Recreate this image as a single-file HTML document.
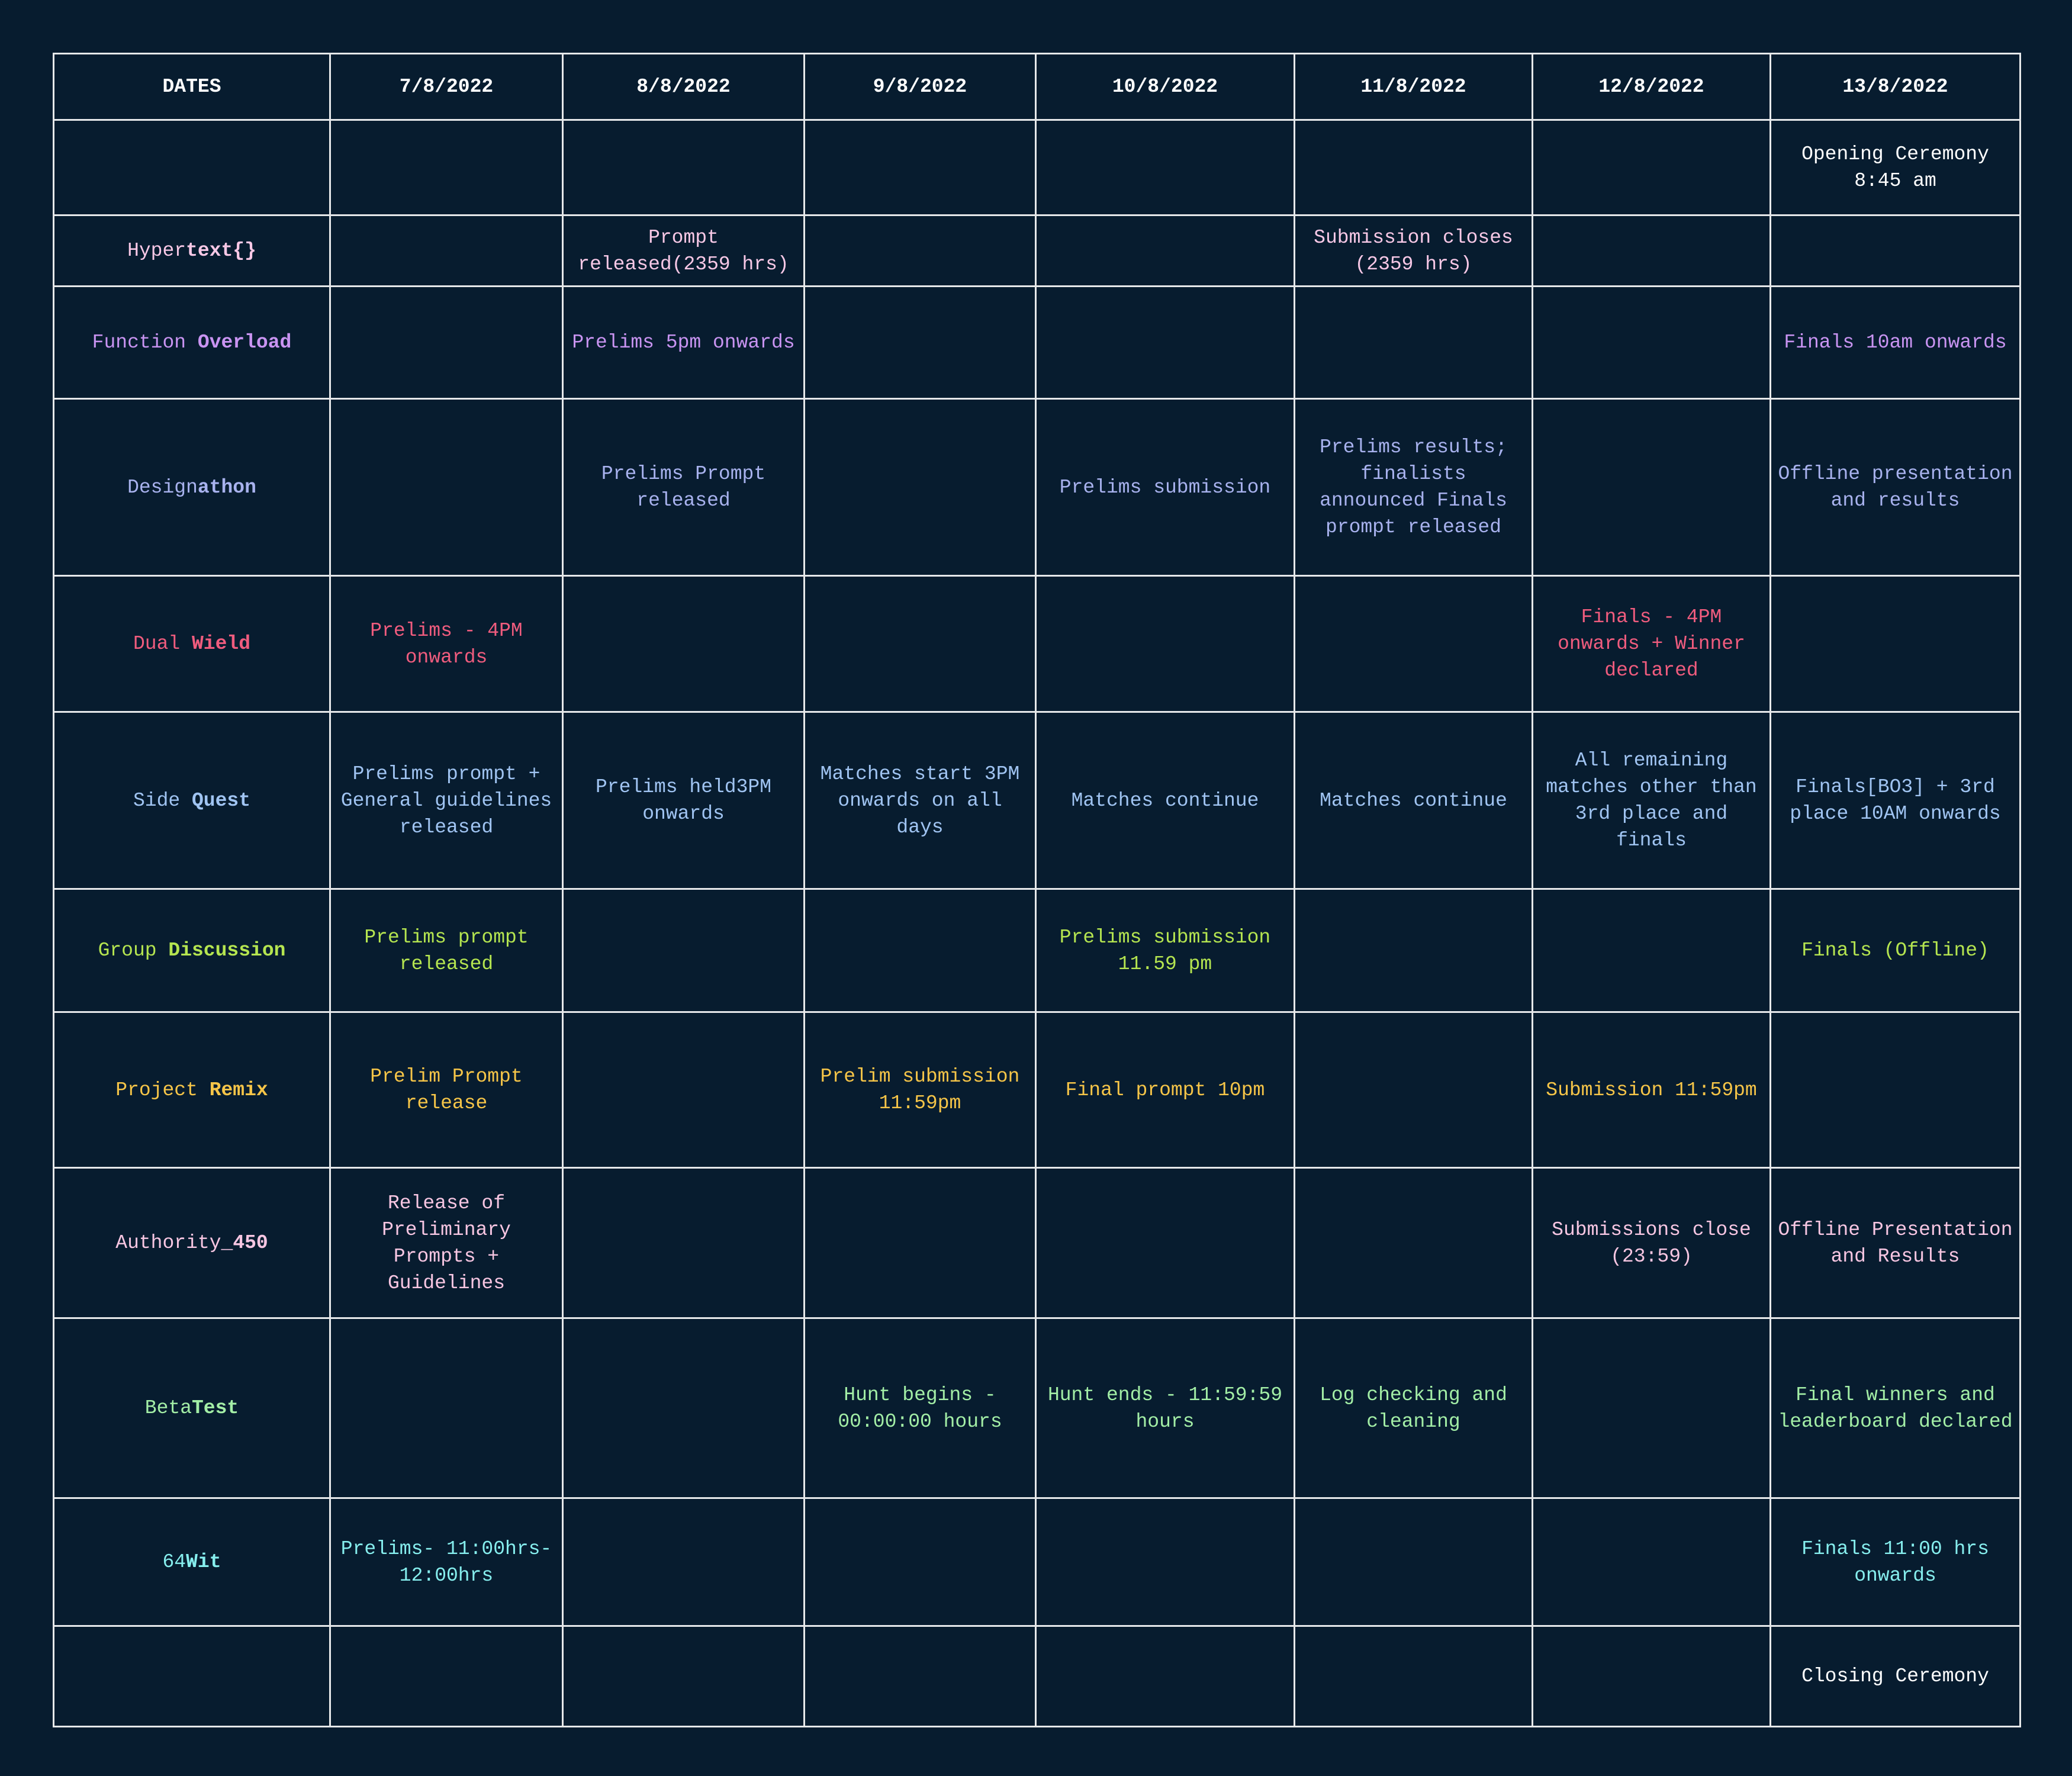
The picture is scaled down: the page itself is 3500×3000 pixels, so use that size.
<!DOCTYPE html>
<html><head><meta charset="utf-8"><style>
html,body{margin:0;padding:0;background:#071c2f;width:3500px;height:3000px;overflow:hidden}
table{position:absolute;left:89px;top:89px;width:3322px;border-collapse:collapse;table-layout:fixed;font-family:"Liberation Mono",monospace;font-size:33px;line-height:45px}
td{border:3px solid #e6e8ea;text-align:center;vertical-align:middle;padding:0 2px;white-space:nowrap;color:#fff}
tr.h td{font-weight:bold}
b{font-weight:bold}
.c1{color:#f7c8e6}.c2{color:#c994f2}.c3{color:#a8b2ee}.c4{color:#f05c7e}.c5{color:#a0c4f2}.c6{color:#b5e550}.c7{color:#f6c548}.c8{color:#f7c6e2}.c9{color:#a3eea6}.c10{color:#86eeee}
</style></head><body>
<table>
<colgroup><col style="width:467px"><col style="width:393px"><col style="width:408px"><col style="width:391px"><col style="width:437px"><col style="width:402px"><col style="width:402px"><col style="width:422px"></colgroup>
<tr class="h" style="height:112px"><td>DATES</td><td>7/8/2022</td><td>8/8/2022</td><td>9/8/2022</td><td>10/8/2022</td><td>11/8/2022</td><td>12/8/2022</td><td>13/8/2022</td></tr>
<tr style="height:161px"><td></td><td></td><td></td><td></td><td></td><td></td><td></td><td>Opening Ceremony<br>8:45 am</td></tr>
<tr class="c1" style="height:120px"><td class="c1">Hyper<b>text{}</b></td><td></td><td class="c1">Prompt<br>released(2359 hrs)</td><td></td><td></td><td class="c1">Submission closes<br>(2359 hrs)</td><td></td><td></td></tr>
<tr style="height:190px"><td class="c2">Function <b>Overload</b></td><td></td><td class="c2">Prelims 5pm onwards</td><td></td><td></td><td></td><td></td><td class="c2">Finals 10am onwards</td></tr>
<tr style="height:299px"><td class="c3">Design<b>athon</b></td><td></td><td class="c3">Prelims Prompt<br>released</td><td></td><td class="c3">Prelims submission</td><td class="c3">Prelims results;<br>finalists<br>announced Finals<br>prompt released</td><td></td><td class="c3">Offline presentation<br>and results</td></tr>
<tr style="height:230px"><td class="c4">Dual <b>Wield</b></td><td class="c4">Prelims - 4PM<br>onwards</td><td></td><td></td><td></td><td></td><td class="c4">Finals - 4PM<br>onwards + Winner<br>declared</td><td></td></tr>
<tr style="height:299px"><td class="c5">Side <b>Quest</b></td><td class="c5">Prelims prompt +<br>General guidelines<br>released</td><td class="c5">Prelims held3PM<br>onwards</td><td class="c5">Matches start 3PM<br>onwards on all<br>days</td><td class="c5">Matches continue</td><td class="c5">Matches continue</td><td class="c5">All remaining<br>matches other than<br>3rd place and<br>finals</td><td class="c5">Finals[BO3] + 3rd<br>place 10AM onwards</td></tr>
<tr style="height:208px"><td class="c6">Group <b>Discussion</b></td><td class="c6">Prelims prompt<br>released</td><td></td><td></td><td class="c6">Prelims submission<br>11.59 pm</td><td></td><td></td><td class="c6">Finals (Offline)</td></tr>
<tr style="height:263px"><td class="c7">Project <b>Remix</b></td><td class="c7">Prelim Prompt<br>release</td><td></td><td class="c7">Prelim submission<br>11:59pm</td><td class="c7">Final prompt 10pm</td><td></td><td class="c7">Submission 11:59pm</td><td></td></tr>
<tr style="height:254px"><td class="c8">Authority_<b>450</b></td><td class="c8">Release of<br>Preliminary<br>Prompts +<br>Guidelines</td><td></td><td></td><td></td><td></td><td class="c8">Submissions close<br>(23:59)</td><td class="c8">Offline Presentation<br>and Results</td></tr>
<tr style="height:304px"><td class="c9">Beta<b>Test</b></td><td></td><td></td><td class="c9">Hunt begins -<br>00:00:00 hours</td><td class="c9">Hunt ends - 11:59:59<br>hours</td><td class="c9">Log checking and<br>cleaning</td><td></td><td class="c9">Final winners and<br>leaderboard declared</td></tr>
<tr style="height:216px"><td class="c10">64<b>Wit</b></td><td class="c10">Prelims- 11:00hrs-<br>12:00hrs</td><td></td><td></td><td></td><td></td><td></td><td class="c10">Finals 11:00 hrs<br>onwards</td></tr>
<tr style="height:170px"><td></td><td></td><td></td><td></td><td></td><td></td><td></td><td>Closing Ceremony</td></tr>
</table>
</body></html>
